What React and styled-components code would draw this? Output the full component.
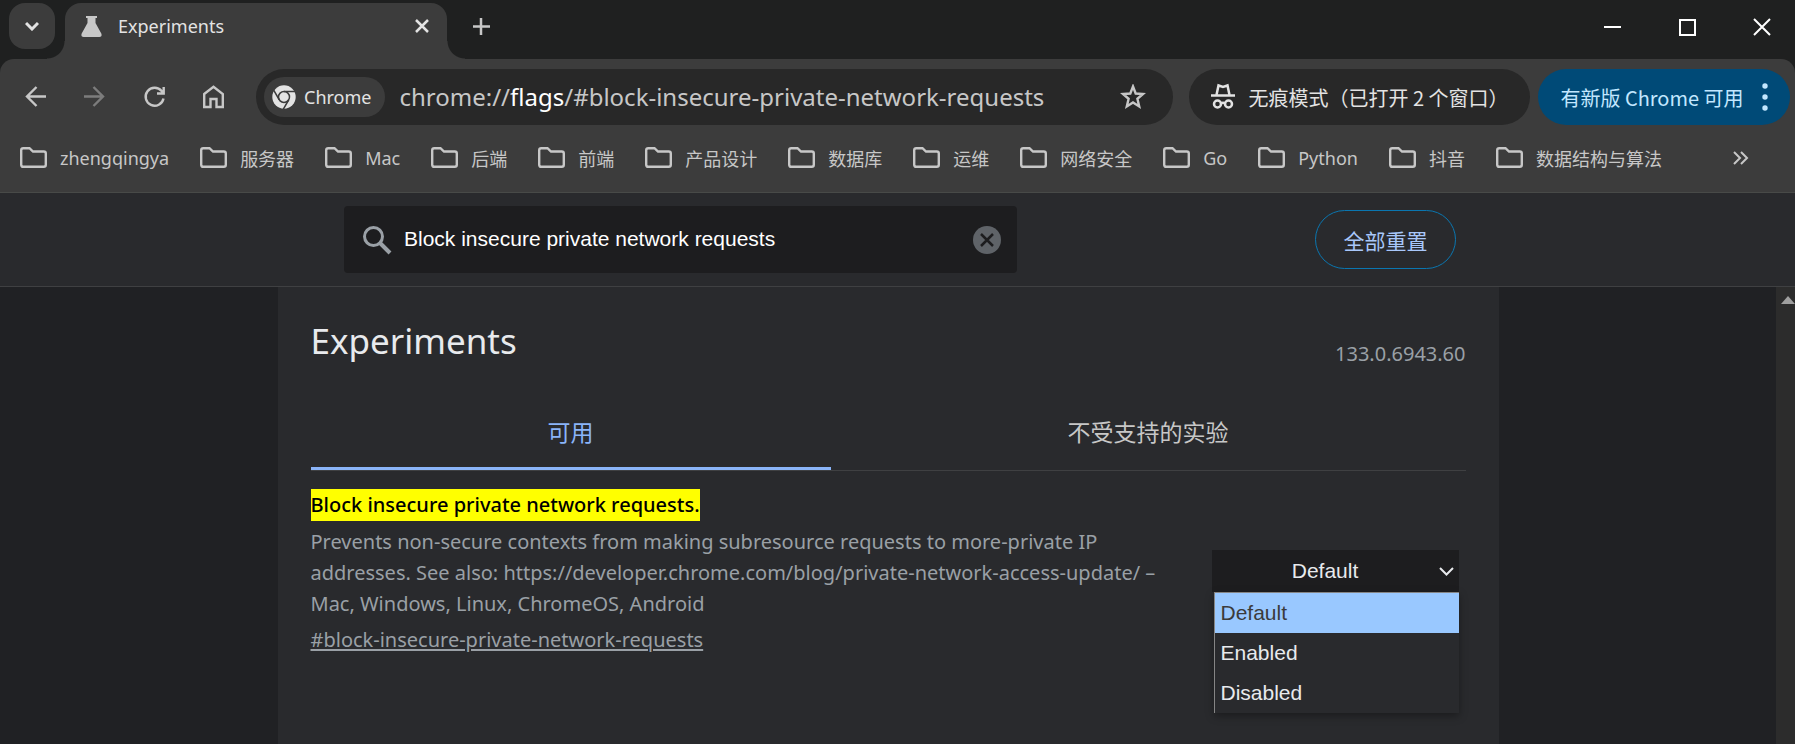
import React, { useState } from "react";
import styled, { createGlobalStyle } from "styled-components";

const UI = `"Noto Sans", "Noto Sans CJK SC", sans-serif`;
const CJK = `"Noto Sans CJK SC", "Noto Sans", sans-serif`;
const ARIAL = `"Liberation Sans", "Noto Sans CJK SC", sans-serif`;

const GlobalStyle = createGlobalStyle`
  * { box-sizing: border-box; }
  body { margin: 0; background: #202124; font-family: ${UI}; }
  button, input, select { font: inherit; color: inherit; margin: 0; }
  svg { display: block; flex: none; }
`;

const Window = styled.div`
  display: flex;
  flex-direction: column;
  min-height: 100vh;
  overflow: hidden;
`;

const PlainButton = styled.button`
  display: flex;
  align-items: center;
  justify-content: center;
  flex: none;
  padding: 0;
  border: 0;
  background: none;
  color: ${(p) => p.$color || "#c7c7c7"};
`;

const TabStrip = styled.header`
  display: flex;
  align-items: flex-start;
  height: 59px;
  padding: 3px 0 0 9px;
  background: #1f2020;
`;

const TabSearch = styled(PlainButton)`
  width: 46px;
  height: 46px;
  border-radius: 16px;
  background: #3c3c3c;
`;

const Tab = styled.div`
  position: relative;
  display: flex;
  align-items: center;
  width: 382px;
  height: 56px;
  margin-left: 10px;
  padding: 0 18px 10px 16px;
  border-radius: 16px 16px 0 0;
  background: #3c3c3c;
  color: #e3e3e3;
  font-size: 18px;

  &::before,
  &::after {
    content: "";
    position: absolute;
    bottom: 0;
    width: 18px;
    height: 18px;
  }
  &::before {
    right: 100%;
    background: radial-gradient(circle at 0 0, transparent 17px, #3c3c3c 18px);
  }
  &::after {
    left: 100%;
    background: radial-gradient(circle at 100% 0, transparent 17px, #3c3c3c 18px);
  }
`;

const TabTitle = styled.span`
  flex: 1;
  margin-left: 16px;
`;

const NewTab = styled(PlainButton)`
  width: 36px;
  height: 46px;
  margin-left: 16px;
`;

const WindowControls = styled.div`
  display: flex;
  gap: 57px;
  height: 48px;
  margin-left: auto;
  padding-right: 24px;
`;

const Toolbar = styled.div`
  display: flex;
  align-items: center;
  height: 76px;
  padding: 0 5px 0 24px;
  border-radius: 14px 14px 0 0;
  background: #3c3c3c;
`;

const ToolbarWrap = styled.div`
  background: #1f2020;
`;

const NavButtons = styled.nav`
  display: flex;
  gap: 35px;
  margin-right: 31px;
`;

const Omnibox = styled.div`
  display: flex;
  flex: 1;
  align-items: center;
  min-width: 0;
  height: 56px;
  padding: 0 27px 0 8px;
  border-radius: 28px;
  background: #282828;
`;

const SiteChip = styled(PlainButton)`
  gap: 8px;
  height: 40px;
  padding: 0 14px 0 8px;
  border-radius: 20px;
  background: #3c3c3c;
  color: #e3e3e3;
  font-size: 18px;
`;

const Url = styled.div`
  flex: 1;
  min-width: 0;
  margin-left: 14px;
  padding-bottom: 2px;
  overflow: hidden;
  white-space: nowrap;
  color: #c7c7c7;
  font-size: 24px;

  b { color: #fff; font-weight: 400; }
`;

const Pill = styled(PlainButton)`
  height: 56px;
  gap: 12px;
  border-radius: 28px;
  font-family: ${CJK};
  font-size: 20px;
  white-space: nowrap;
`;

const IncognitoPill = styled(Pill)`
  width: 341px;
  margin-left: 16px;
  background: #282828;
  color: #e3e3e3;
`;

const UpdatePill = styled(Pill)`
  width: 252px;
  gap: 18px;
  margin-left: 8px;
  background: #004a77;
  color: #c2e7ff;
`;

const Bookmarks = styled.nav`
  display: flex;
  align-items: center;
  gap: 31px;
  height: 58px;
  padding: 0 46px 12px 20px;
  border-bottom: 1px solid #484a48;
  background: #3c3c3c;
`;

const Bookmark = styled.a`
  display: flex;
  align-items: center;
  gap: 13px;
  color: #c7c7c7;
  font-size: 18px;
  white-space: nowrap;
  text-decoration: none;
`;

const More = styled(PlainButton)`
  margin-left: auto;
`;

const SearchBar = styled.div`
  height: 94px;
  padding-right: 20px;
  border-bottom: 1px solid #3f4042;
  background: #292a2d;
`;

const SearchInner = styled.div`
  display: flex;
  align-items: center;
  justify-content: space-between;
  width: 100%;
  max-width: 1221px;
  height: 93px;
  margin: 0 auto;
  padding: 0 42px 0 67px;
`;

const SearchField = styled.label`
  display: flex;
  align-items: center;
  width: 673px;
  height: 67px;
  padding: 0 16px 0 18px;
  border-radius: 4px;
  background: #1d1d1f;
  color: #9aa0a6;
`;

const SearchInput = styled.input`
  flex: 1;
  min-width: 0;
  margin-left: 12px;
  padding: 0 0 2px;
  border: 0;
  outline: 0;
  background: none;
  color: #fff;
  font-family: ${ARIAL};
  font-size: 21px;
`;

const ResetButton = styled.button`
  width: 141px;
  height: 59px;
  padding: 0;
  border: 1px solid #0a76b0;
  border-radius: 30px;
  background: none;
  color: #a8c7fa;
  font-family: ${CJK};
  font-size: 21px;
`;

const Body = styled.div`
  display: flex;
  flex: 1;
  background: #202124;
`;

const Scrollbar = styled.div`
  width: 19px;
  padding: 9px 0 0 5px;
  overflow: hidden;
  background: #2c2c2c;
`;

const Center = styled.div`
  flex: 1;
  min-width: 0;
`;

const Panel = styled.main`
  width: 100%;
  max-width: 1221px;
  height: 100%;
  margin: 0 auto;
  padding: 26px 33px 30px;
  background: #292a2d;
`;

const TitleRow = styled.div`
  display: flex;
  align-items: flex-end;
  justify-content: space-between;
`;

const Title = styled.h1`
  margin: 0;
  color: #e8eaed;
  font-size: 35px;
  font-weight: 400;
  line-height: 56px;
`;

const Version = styled.span`
  color: #9aa0a6;
  font-size: 20px;
  line-height: 30px;
`;

const Tabs = styled.div`
  display: flex;
  margin-top: 27px;
  border-bottom: 1px solid #3f4042;
`;

const TabButton = styled.button`
  flex: ${(p) => p.$grow} 1 0;
  height: 74px;
  padding: 0 0 2px;
  border: 0;
  border-bottom: 3px solid ${(p) => (p.$active ? "#8ab4f8" : "transparent")};
  border-radius: 2px 2px 0 0;
  background: none;
  color: ${(p) => (p.$active ? "#8ab4f8" : "#c7c7c7")};
  font-family: ${CJK};
  font-size: 23px;
`;

const Experiment = styled.section`
  display: flex;
  align-items: flex-start;
  justify-content: space-between;
  padding-top: 18px;
`;

const Info = styled.div`
  width: 870px;
`;

const Name = styled.h2`
  margin: 0 0 5px;
  font-size: 20px;
  font-weight: 500;
  line-height: 32px;

  mark { display: inline-block; background: #ff0; color: #000; }
`;

const Description = styled.p`
  margin: 0 0 5px;
  color: #9aa0a6;
  font-size: 20px;
  line-height: 31px;
`;

const Permalink = styled.a`
  color: #9aa0a6;
  font-size: 20px;
  line-height: 31px;
  text-decoration-thickness: 2px;
  text-underline-offset: 2px;
`;

const Picker = styled.div`
  position: relative;
  width: 247px;
  margin: 61px 7px 0 0;
  color: #e8eaed;
  font-family: ${ARIAL};
  font-size: 21px;

  > svg {
    position: absolute;
    top: 14px;
    right: 5px;
    pointer-events: none;
  }
`;

const Select = styled.select`
  width: 100%;
  height: 42px;
  padding: 0 20px 2px 0;
  border: 0;
  outline: 0;
  appearance: none;
  background: #1d1d1f;
  text-align: center;
  text-align-last: center;
`;

const Options = styled.ul`
  position: absolute;
  top: 100%;
  right: 0;
  left: 2px;
  margin: 0;
  padding: 0;
  border-top: 1px solid #858585;
  border-left: 1px solid #858585;
  background: #292a2d;
  box-shadow: 0 3px 8px rgba(0, 0, 0, 0.35);
  list-style: none;
`;

const Option = styled.li`
  height: 40px;
  padding-left: 6px;
  background: ${(p) => (p.$selected ? "#99c8ff" : "none")};
  color: ${(p) => (p.$selected ? "#3b3b3b" : "#e8eaed")};
  line-height: 40px;
`;

const Icon = ({ w = 24, h = w, box = `0 0 ${w} ${h}`, sw = 2, fill = "none", children }) => (
  <svg width={w} height={h} viewBox={box} fill={fill} stroke={fill === "none" ? "currentColor" : "none"} strokeWidth={sw} aria-hidden="true">
    {children}
  </svg>
);

const Folder = () => (
  <Icon w={27} h={21} sw={2.4}>
    <path d="M1.200 3.200Q1.200 1.200 3.200 1.200H9.500L13 4.500H23.800Q25.800 4.500 25.800 6.500V17.800Q25.800 19.800 23.800 19.800H3.200Q1.200 19.800 1.200 17.800Z" />
  </Icon>
);

const ChromeLogo = () => (
  <svg width="24" height="24" viewBox="0 0 24 24" aria-hidden="true">
    <circle cx="12" cy="12" r="11.700" fill="#e3e3e3" />
    <circle cx="12" cy="12" r="5.500" fill="none" stroke="#3c3c3c" strokeWidth="1.500" />
    <path d="M12 6.500H24M7.240 14.750L1.240 4.360M16.760 14.750L10.760 25.140" fill="none" stroke="#3c3c3c" strokeWidth="1.500" />
  </svg>
);

const bookmarks = ["zhengqingya", "服务器", "Mac", "后端", "前端", "产品设计", "数据库", "运维", "网络安全", "Go", "Python", "抖音", "数据结构与算法"];
const states = ["Default", "Enabled", "Disabled"];

export default function App() {
  const [query, setQuery] = useState("Block insecure private network requests");
  const [state, setState] = useState("Default");

  return (
    <Window>
      <GlobalStyle />
      <TabStrip>
        <TabSearch $color="#e3e3e3" aria-label="Search tabs">
          <Icon w={14} h={10} sw={3}><path d="M1 2L7 8L13 2" /></Icon>
        </TabSearch>
        <Tab>
          <Icon w={21} fill="#c7c7c7" h={21}>
            <path d="M5 0H16V2H14.500V7L20.300 17.500Q21.500 21 18.500 21H2.500Q-.5 21 .7 17.500L6.500 7V2H5Z" />
          </Icon>
          <TabTitle>Experiments</TabTitle>
          <PlainButton $color="#e3e3e3" aria-label="Close tab">
            <Icon w={14} sw={2.5}><path d="M1 1L13 13M13 1L1 13" /></Icon>
          </PlainButton>
        </Tab>
        <NewTab aria-label="New tab"><Icon w={18} sw={2.5}><path d="M9 1V18M1 9.500H18" /></Icon></NewTab>
        <WindowControls>
          <PlainButton $color="#fff" aria-label="Minimize"><Icon w={18}><path d="M1 9H18" /></Icon></PlainButton>
          <PlainButton $color="#fff" aria-label="Maximize"><Icon w={18}><path d="M2 2H17V17H2Z" /></Icon></PlainButton>
          <PlainButton $color="#fff" aria-label="Close"><Icon w={18}><path d="M1 1L17 17M17 1L1 17" /></Icon></PlainButton>
        </WindowControls>
      </TabStrip>

      <ToolbarWrap>
        <Toolbar>
          <NavButtons>
            <PlainButton aria-label="Back"><Icon sw={2.4}><path d="M22 11.500H3M12.500 2L3 11.500L12.500 21" /></Icon></PlainButton>
            <PlainButton $color="#7c7c7c" aria-label="Forward"><Icon sw={2.4}><path d="M1 11.500H20M10.500 2L20 11.500L10.500 21" /></Icon></PlainButton>
            <PlainButton aria-label="Reload"><Icon sw={2.4}><path d="M21.500 13.500A9 9 0 1 1 19.600 6L21.500 8M21.700 2V8.500H15" /></Icon></PlainButton>
            <PlainButton aria-label="Home"><Icon w={24} h={24} sw={2.4}><path d="M3.200 9L12.500 1.800L21.800 9V22H15.500V14H9.500V22H3.200Z" /></Icon></PlainButton>
          </NavButtons>
          <Omnibox>
            <SiteChip><ChromeLogo />Chrome</SiteChip>
            <Url>chrome://<b>flags</b>/#block-insecure-private-network-requests</Url>
            <PlainButton aria-label="Bookmark this tab">
              <Icon w={26} sw={2.4}><path d="M13 2.500L15.700 9.500L23 10L17.400 14.800L19.200 22.500L13 18.500L6.800 22.500L8.600 14.800L3 10L10.300 9.500Z" /></Icon>
            </PlainButton>
          </Omnibox>
          <IncognitoPill>
            <Icon w={26} h={28} sw={2.5}>
              <path d="M6.500 12L8.500 2.500L13 4L17.500 2.500L19.500 12" />
              <path d="M1 12.500H25" />
              <circle cx="7.500" cy="21" r="3.500" />
              <circle cx="18.500" cy="21" r="3.500" />
              <path d="M10.500 20.500Q13 19 15.500 20.500" />
            </Icon>
            无痕模式（已打开 2 个窗口）
          </IncognitoPill>
          <UpdatePill>
            有新版 Chrome 可用
            <Icon w={6} h={28} fill="currentColor"><circle cx="3" cy="3" r="2.700" /><circle cx="3" cy="14" r="2.700" /><circle cx="3" cy="25" r="2.700" /></Icon>
          </UpdatePill>
        </Toolbar>
      </ToolbarWrap>

      <Bookmarks>
        {bookmarks.map((name) => (
          <Bookmark key={name} href="#"><Folder />{name}</Bookmark>
        ))}
        <More aria-label="More bookmarks"><Icon w={16} h={14}><path d="M1 1L7 7L1 13M8 1L14 7L8 13" /></Icon></More>
      </Bookmarks>

      <SearchBar>
        <SearchInner>
          <SearchField>
            <Icon w={30} sw={3}><circle cx="11.500" cy="11.500" r="9" /><path d="M18 18L28 28" strokeWidth="4" /></Icon>
            <SearchInput aria-label="Search flags" value={query} onChange={(e) => setQuery(e.target.value)} />
            <PlainButton type="button" aria-label="Clear search" onClick={() => setQuery("")}>
              <svg width="28" height="28" viewBox="0 0 28 28"><circle cx="14" cy="14" r="14" fill="#5f6368" /><path d="M8 8L20 20M20 8L8 20" stroke="#1d1d1f" strokeWidth="2.500" /></svg>
            </PlainButton>
          </SearchField>
          <ResetButton>全部重置</ResetButton>
        </SearchInner>
      </SearchBar>

      <Body>
        <Center>
          <Panel>
            <TitleRow>
              <Title>Experiments</Title>
              <Version>133.0.6943.60</Version>
            </TitleRow>
            <Tabs role="tablist">
              <TabButton role="tab" aria-selected="true" $active $grow={520}>可用</TabButton>
              <TabButton role="tab" aria-selected="false" $grow={635}>不受支持的实验</TabButton>
            </Tabs>
            <Experiment>
              <Info>
                <Name><mark>Block insecure private network requests.</mark></Name>
                <Description>
                  Prevents non-secure contexts from making subresource requests to more-private IP addresses. See also: https://developer.chrome.com/blog/private-network-access-update/ – Mac, Windows, Linux, ChromeOS, Android
                </Description>
                <Permalink href="#block-insecure-private-network-requests">#block-insecure-private-network-requests</Permalink>
              </Info>
              <Picker>
                <Select aria-label="Experiment state" value={state} onChange={(e) => setState(e.target.value)}>
                  {states.map((s) => <option key={s}>{s}</option>)}
                </Select>
                <Icon w={15} h={14}><path d="M1 4L7.500 10.500L14 4" /></Icon>
                <Options>
                  {states.map((s) => (
                    <Option key={s} $selected={s === state} onClick={() => setState(s)}>{s}</Option>
                  ))}
                </Options>
              </Picker>
            </Experiment>
          </Panel>
        </Center>
        <Scrollbar>
          <Icon w={14} h={8} fill="#9f9f9f"><path d="M0 8L7 0L14 8Z" /></Icon>
        </Scrollbar>
      </Body>
    </Window>
  );
}
